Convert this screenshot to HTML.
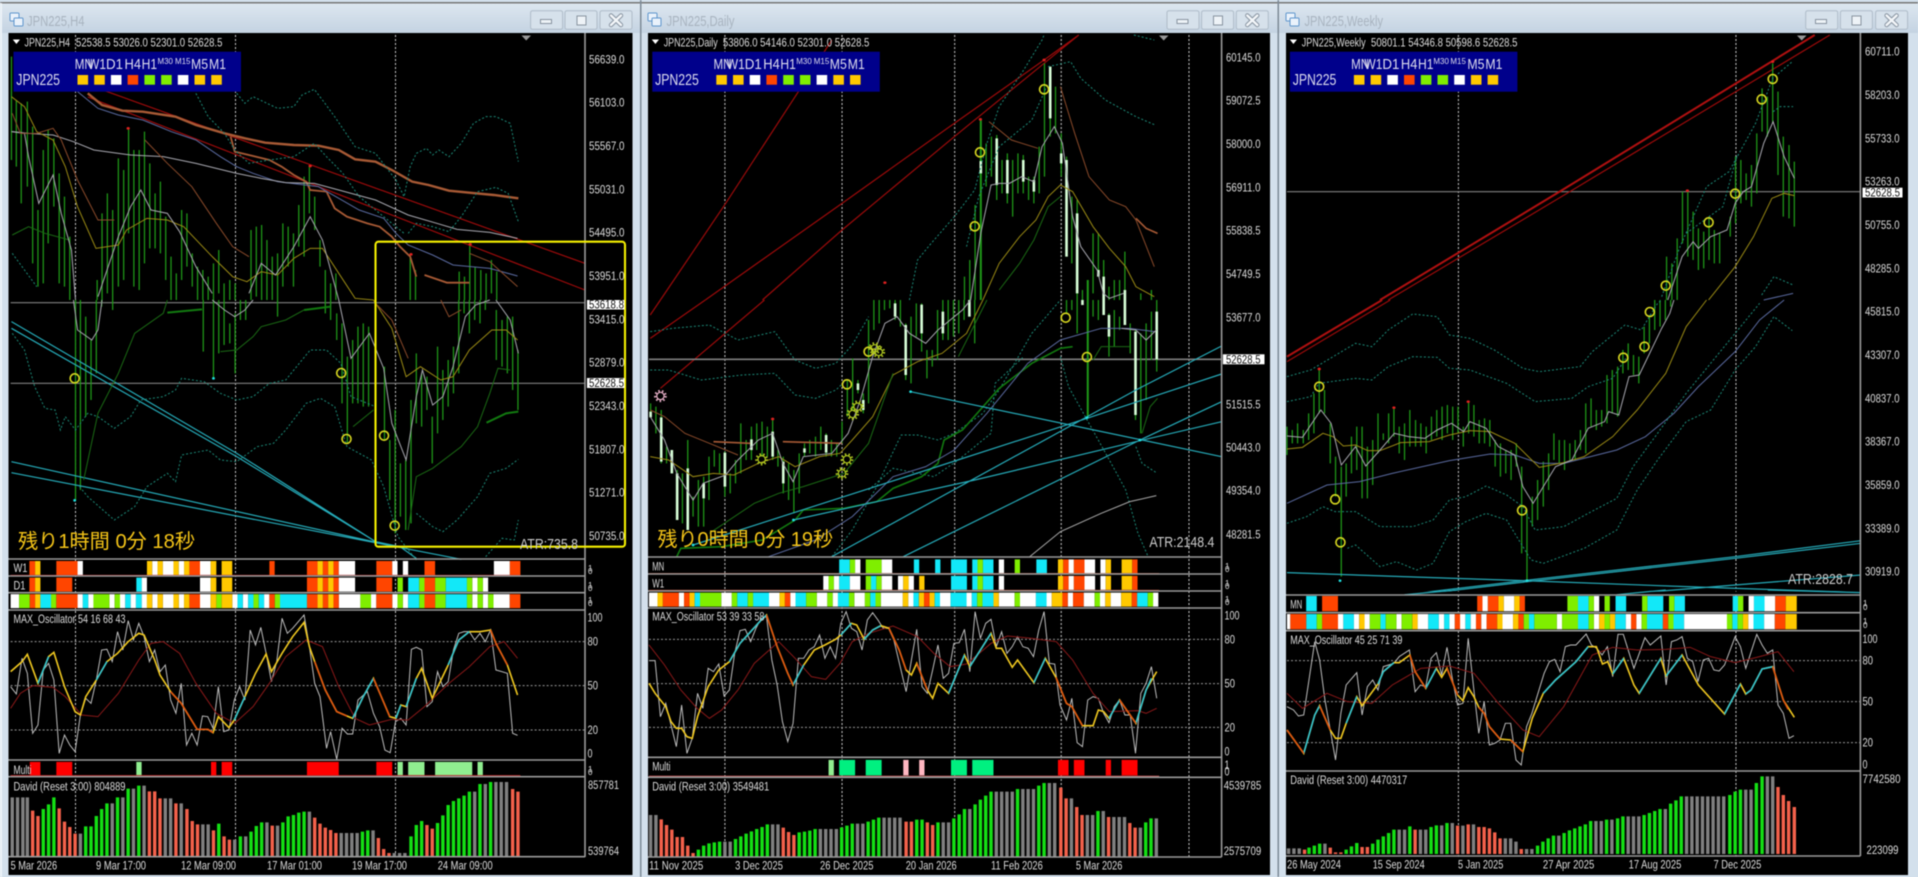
<!DOCTYPE html>
<html><head><meta charset="utf-8"><title>JPN225</title>
<style>
html,body{margin:0;padding:0;background:#d3e0ec;width:1918px;height:877px;overflow:hidden}
svg{position:absolute;left:0;top:0;filter:blur(.45px)}
path,ellipse{vector-effect:non-scaling-stroke;fill:none}
text{font-family:"Liberation Sans","Noto Sans CJK JP",sans-serif;font-size:12.3px;fill:#ddd}
.ch{stroke:#1f9a18;stroke-width:1.25}
.bd{stroke:#d8ffd8;stroke-width:2.6}
.dt{stroke:#1c8a78;stroke-dasharray:2 2;stroke-width:1}
.vd{stroke:#d0d0d0;stroke-dasharray:2 2;stroke-width:1}
.hd{stroke:#999;stroke-dasharray:2 2;stroke-width:1}
.cy{stroke:#25aab8;stroke-width:1.2}
.rd{stroke:#9c0a0a;stroke-width:1.2}
.wh{stroke:#a8a8b0;stroke-width:1}
.ol{stroke:#9a8a14;stroke-width:1}
.br{stroke:#8a4a2a;stroke-width:1}
.tb{stroke:#a85a35;stroke-width:2.4}
.bl{stroke:#5a6aa0;stroke-width:1}
.dg{stroke:#1a6a14;stroke-width:1}
.tg{stroke:#127a10;stroke-width:2}
.ci{stroke:#d8d820;stroke-width:1.6;rx:11px;ry:13.5px}
.ge{stroke:#b0c820;stroke-width:1.2}
.gd{stroke:#b0c820;stroke-width:3;stroke-dasharray:1.4 2}
.o{stroke:#ff4500}.y{stroke:#ffc800}.w{stroke:#fff}.c{stroke:#12e8f8}.g{stroke:#7fee00}
.ow{stroke:#c4c4c4;stroke-width:.95}
.my{stroke:#f0c820;stroke-width:1.6}
.mc{stroke:#30c4d4;stroke-width:1.6}
.mo{stroke:#e05510;stroke-width:1.6}
.sg{stroke:#8a1818;stroke-width:1}
.bg{stroke:#808080}.br2{stroke:#f4614b}.bn{stroke:#14e014}
.sep{stroke:#9a9a9a;stroke-width:1.6}
.ttl{font-size:15px;fill:#a8b3bf}
.pn{font-size:15px;fill:#dde}
.sm{font-size:8.5px;fill:#dde}
.jp{font-size:15.5px;fill:#dde}
.rem{font-size:20px;fill:#f5c518}
.atr{font-size:15px;fill:#ccc}
.blk{fill:#000}
</style></head><body>
<svg width="1918" height="877" viewBox="0 0 1918 877" xmlns="http://www.w3.org/2000/svg">
<defs><linearGradient id="tg" x1="0" y1="0" x2="0" y2="1"><stop offset="0" stop-color="#dde7f0"/><stop offset="1" stop-color="#c4d3e2"/></linearGradient></defs>
<rect width="1918" height="877" fill="#d3e0ec"/>
<rect x="0" y="3" width="1918" height="30" fill="url(#tg)"/>
<rect x="0" y="2" width="1918" height="1.5" fill="#777"/>
<rect x="640" y="0" width="1.5" height="877" fill="#7d8a96"/>
<rect x="1277.5" y="0" width="1.5" height="877" fill="#7d8a96"/>
<rect x="0" y="3" width="2" height="874" fill="#eef3f8"/>

<!-- charts -->
<rect x="8.5" y="33" width="624" height="842" fill="#000"/>
<rect x="648" y="33" width="622" height="842" fill="#000"/>
<rect x="1286" y="33" width="622" height="842" fill="#000"/>

<!-- WINDOW 1 -->
<g transform="translate(0,0) scale(.40816,.33333)">
<path class="vd" d="M185 105V2570M577 105V2570M969 105V2570"/>
<path class="ch" d="M28 170V480M40 300V500M52 310V610M67 305V560M80 380V790M93 630V860M106 450V850M118 390V730M132 415V620M145 520V850M158 590V860M171 710V900M238 840V900M250 640V900M263 580V880M276 630V900M290 475V860M303 510V840M315 385V700M328 450V860M341 450V870M354 395V790M367 490V745M380 580V745M393 545V760M406 650V840M419 770V900M432 820V900M445 630V840M458 640V800M471 760V860M484 800V900M497 810V900M510 830V900M523 790V900M536 750V880M549 850V900M563 840V900M576 850V900M615 690V900M628 680V890M641 675V900M654 720V900M667 770V900M680 760V900M693 670V860M706 680V800M719 700V860M732 615V740M745 530V770M758 495V640M771 590V690M784 720V800M797 810V900M810 850V900M823 820V900M1005 760V900M1018 810V900M1125 815V900M1138 830V900M1151 735V900M1164 800V900M1178 810V900M1191 820V900M1204 780V880M1217 815V900"/>
<path class="rd" d="M215 254L1433 790M215 291L1433 870"/>
<path class="tb" d="M215 280L250 315 300 332 350 335 430 350 480 375 550 400 600 415 650 428 720 435 780 437 830 450 870 478 920 485 960 510 1010 545 1050 555 1100 572 1150 578 1210 585 1270 595"/>
<path class="tb" style="stroke-width:1.8" d="M565 410L575 455 620 468 660 480 690 500 720 525 750 545 760 570 800 575 820 625 850 650 900 670 930 680 960 710 980 740 1005 770 1020 830M1040 825L1095 848 1150 848"/>
<path class="bl" d="M190 275L240 325 290 345 350 360 420 395 480 420 540 470 580 500 620 520 680 545 780 560 830 595 880 630 940 655 970 700 1000 735 1060 765 1110 795 1200 805 1268 828"/>
<path class="wh" d="M30 395L70 400 130 405 180 425 230 450 320 465 400 470 480 490 580 520 640 535 700 548 770 550 830 570 920 600 1000 645 1070 670 1120 688 1200 697 1268 715"/>
<path class="dt" d="M480 280L510 350 550 400 575 450 610 490 660 480 720 470 770 430 800 470 840 520 880 590 930 640 990 700M580 280L600 310 620 290 680 325 720 320 740 285 770 268 790 300 820 350 870 440 920 460 970 540 990 590 1005 500 1020 460 1045 445 1060 465 1075 450 1100 470 1130 430 1160 370 1190 350 1215 350 1250 370 1270 485M1000 700L1020 670 1060 680 1100 695 1130 650 1170 575 1215 562 1245 580 1270 665M30 760L60 810 90 860"/>
<path class="dg" d="M30 705L70 680 110 700 170 720"/>
<path class="ol" d="M28 290L60 320 90 395 130 420 160 500 190 620 235 745 290 735 310 690 360 655 410 660 450 680 520 770 570 830 605 845 640 815 680 825 720 775 760 745 790 745 830 820 870 895 915 900"/>
<path class="wh" d="M28 395L60 400 70 470 95 610 130 525 150 640 175 750 185 900M240 890L290 710 320 620 345 570 370 630 410 640 440 695 480 800 520 880M610 880L640 790 675 825 720 740 760 650 790 720 830 900"/>
<path class="br" d="M30 340L50 400 90 400 130 385 150 420 190 540 240 660 280 660M355 420L410 490 470 560 530 670 570 740 610 770M1150 760L1200 785 1268 860"/>
<ellipse cx="314" cy="385" rx="4" ry="4" fill="#e02020" style="fill:#e02020"/><ellipse cx="760" cy="498" rx="4" ry="4" style="fill:#e02020"/><ellipse cx="1007" cy="763" rx="4" ry="4" style="fill:#e02020"/><ellipse cx="1152" cy="733" rx="4" ry="4" style="fill:#e02020"/>
<g transform="translate(0,900)">
<path style="stroke:#808080;stroke-width:1.2" d="M26 8H1433M26 250H1433"/>
<path class="ch" d="M185 0V600M197 0V570M210 50V350M223 120V300M236 0V220M249 0V20M276 0V30M498 0V155M523 0V235M536 0V160M549 0V135M563 70V130M576 40V220M589 0V60M602 0V60M680 0V50M797 0V40M810 0V60M825 40V120M838 70V310M851 170V430M864 120V310M877 80V310M890 70V320M903 80V320M942 200V420M955 420V600M968 330V700M981 490V650M994 480V690M1007 300V670M1020 160V370M1033 220V380M1046 230V330M1059 350V490M1072 140V400M1085 210V360M1098 180V320M1111 140V280M1124 0V220M1137 0V40M1150 0V100M1163 0V60M1176 0V70M1189 0V30M1216 30V180M1230 60V200M1243 50V220M1256 50V270M1269 150V330"/>
<path class="cy" d="M28 65L580 460 920 725 980 740 1020 775M28 85L580 470 920 725M28 485L970 740 1130 778M28 518L970 740"/>
<path class="dt" d="M30 100L60 150 85 260 110 325 135 330 148 390 160 350 185 390 215 340 240 350 280 385 320 350 345 300 400 290 430 270 445 235 500 245 540 280 580 300 620 290 660 250 700 240 760 150 800 150 835 190 860 290 920 320M195 560L215 590 280 660 330 620 360 560 410 520 430 545 445 465 510 450 540 480 580 485 630 440 670 430 700 390 750 310 785 295 820 320 850 440 910 480 940 560 975 710 1020 780M1190 770L1230 715 1260 720 1270 660M1020 640L1060 680 1085 695 1120 660 1170 590 1200 520 1240 505 1270 478"/>
<path class="dg" d="M205 540L240 340 290 220 330 100 400 40 410 0M540 155L580 150 620 110 640 80 700 60 745 30M1000 690L1020 530 1060 505 1130 440 1170 380 1200 280 1220 205 1250 210M865 380L915 330"/>
<path class="tg" d="M1192 368L1240 340 1270 335M410 38L495 28M745 30L810 20"/>
<path class="wh" d="M180 0L190 90 225 120 240 90 250 0M520 0L550 30 575 50 600 30 620 0M830 0L860 175 905 100 940 205 960 370 995 480 1020 290 1035 210 1060 315 1085 290 1110 200 1140 50 1165 15 1200 0M1215 0L1250 60 1270 160"/>
<path class="ol" d="M915 0L960 85 995 230 1030 200 1080 240 1110 230 1150 150 1205 90 1240 90 1268 120"/>
<path class="br" d="M920 10L960 60 1000 175M1080 0L1100 50 1130 30"/>
<ellipse class="ci" cx="183" cy="235" rx="10" ry="12"/><ellipse class="ci" cx="836" cy="219" rx="10" ry="12"/><ellipse class="ci" cx="849" cy="417" rx="10" ry="12"/><ellipse class="ci" cx="941" cy="407" rx="10" ry="12"/><ellipse class="ci" cx="967" cy="677" rx="10" ry="12"/>
<ellipse cx="523" cy="235" rx="3.5" ry="4" style="fill:#20e0e0"/><ellipse cx="183" cy="601" rx="3.5" ry="4" style="fill:#20e0e0"/>
</g>
<!-- strips -->
<g transform="translate(0,900)" stroke-width="14">
<path class="o" d="M72 804H86M138 804H190M464 804H490M660 804H673M752 804H778M791 804H804M817 804H830M922 804H961M1040 804H1066M1249 804H1275"/>
<path class="y" d="M86 804H99M360 804H373M386 804H399M425 804H438M451 804H464M516 804H530M543 804H569M778 804H791M804 804H817"/>
<path class="w" d="M190 804H203M373 804H386M399 804H425M438 804H451M490 804H516M830 804H870M961 804H974M987 804H1000M1210 804H1249"/>
<path class="o" d="M72 854H86M138 854H177M752 854H778M791 854H804M817 854H830M922 854H961M1040 854H1066"/>
<path class="y" d="M86 854H99M516 854H530M543 854H569M778 854H791M804 854H817"/>
<path class="w" d="M347 854H360M490 854H516M830 854H870M1157 854H1170M1183 854H1196"/>
<path class="c" d="M334 854H347M1000 854H1027M1092 854H1144"/>
<path class="g" d="M974 854H987M1027 854H1040M1066 854H1092M1144 854H1157M1170 854H1183"/>
<path style="stroke:#c02020;stroke-width:1" d="M26 826H1275"/>
</g>
<g transform="translate(0,1770)">
<g stroke-width="14">
<path class="w" d="M26 33.5H47M190 33.5H203M216 33.5H229M268 33.5H281M294 33.5H307M320 33.5H333M347 33.5H360M373 33.5H386M399 33.5H425M438 33.5H451M490 33.5H516M569 33.5H582M595 33.5H608M647 33.5H660M830 33.5H883M909 33.5H922M961 33.5H974M987 33.5H1000M1157 33.5H1170M1183 33.5H1196M1209 33.5H1249"/>
<path class="g" d="M47 33.5H73M125 33.5H138M229 33.5H268M281 33.5H294M530 33.5H543M621 33.5H634M673 33.5H686M883 33.5H909M974 33.5H987M1027 33.5H1040M1066 33.5H1092M1144 33.5H1157M1170 33.5H1183M1196 33.5H1209"/>
<path class="o" d="M73 33.5H86M138 33.5H190M464 33.5H490M660 33.5H673M752 33.5H778M791 33.5H804M817 33.5H830M922 33.5H961M1040 33.5H1066M1249 33.5H1275"/>
<path class="y" d="M86 33.5H99M360 33.5H373M386 33.5H399M425 33.5H438M451 33.5H464M516 33.5H530M543 33.5H569M778 33.5H791M804 33.5H817"/>
<path class="c" d="M99 33.5H125M203 33.5H216M307 33.5H320M333 33.5H347M582 33.5H595M608 33.5H621M634 33.5H647M686 33.5H752M1000 33.5H1027M1092 33.5H1144"/>
</g>
<path class="hd" d="M26 155H1433M26 287H1433M26 420H1433"/>
<path class="ow" d="M26 290L40 312 54 205 67 250 80 430 93 405 106 240 119 220 132 270 145 490 158 435 171 465 184 485 197 375 210 325 223 340 236 270 249 180 262 178 275 215 288 125 301 180 314 92 327 150 340 100 353 140 366 215 379 180 392 245 405 225 418 330 431 370 444 280 457 465 470 430 483 465 496 378 509 380 522 415 535 290 548 425 561 420 574 330 587 290 600 330 613 120 626 165 639 112 652 190 665 275 678 215 691 85 704 130 717 115 745 75 758 170 771 280 784 320 800 475 810 425 825 508 838 415 851 432 864 432 877 330 900 305 915 370 930 410 943 480 956 488 969 395 982 385 995 405 1008 178 1020 172 1033 180 1046 350 1059 335 1072 245 1085 290 1098 275 1111 180 1124 130 1137 125 1150 125 1163 150 1176 130 1189 155 1202 120 1215 240 1230 245 1243 250 1256 430 1268 436"/>
<path class="sg" d="M26 355L50 310 80 287 130 292 160 320 200 375 240 380 290 310 340 210 370 160 400 155 440 190 480 280 530 370 575 400 620 350 660 280 700 200 750 150 790 170 830 290 870 385 905 405 960 388 1000 390 1040 350 1100 280 1150 230 1200 170 1235 155 1268 205"/>
<path class="my" d="M26 245L54 215 67 193 93 280 119 200 132 187 158 290 184 365 197 375 210 320 236 270 262 215 288 190 314 155 340 130 353 135 379 210 392 255 418 305 444 340 483 418 509 418 522 428 535 380 561 413 574 390 600 320 626 250 652 192 665 245 691 190 717 140 745 97 758 170 771 215 797 300 825 365 850 378 864 385 890 320 915 265 955 380 970 385 982 345 995 350 1020 265 1033 235 1059 325 1098 225 1124 150 1150 125 1176 125 1202 120 1215 160 1243 225 1268 315"/>
<path class="mc" d="M93 280L119 200M236 270L262 215M574 390L600 320M864 385L890 320 915 265M970 385L982 345M995 350L1020 265M1098 225L1124 150 1150 125"/>
<path class="mo" d="M418 305L444 340 483 418 509 418 522 428M771 215L797 300 825 365 850 378M915 265L955 380M1202 120L1215 160 1243 225"/>
<g stroke-width="13.5">
<path style="stroke:#ff0000" d="M73 536H99M138 536H177M517 536H530M543 536H569M752 536H830M922 536H961"/>
<path style="stroke:#90ee90" d="M334 536H347M974 536H987M1000 536H1040M1066 536H1157M1170 536H1183"/>
</g>
<path style="stroke:#c02020;stroke-width:1" d="M26 557H1275"/>
<g stroke-width="3.4">
<path class="bg" d="M30 800V622M43 800V622M56 800V622M67 800V622M197 800V731M275 800V640M301 800V622M327 800V596M353 800V587M405 800V625M418 800V625M444 800V640M497 800V703M510 800V703M575 800V749M602 800V739M654 800V697M680 800V707M758 800V665M836 800V729M849 800V729M862 800V729M875 800V729M914 800V721M966 800V789M979 800V789M992 800V789M1163 800V605M1189 800V582M1215 800V576M1228 800V576M1241 800V576"/>
<path class="br2" d="M80 800V662M93 800V678M145 800V655M158 800V695M171 800V711M184 800V731M366 800V604M379 800V604M392 800V625M431 800V640M458 800V657M471 800V693M484 800V703M523 800V721M549 800V739M562 800V749M667 800V707M771 800V683M784 800V701M797 800V713M810 800V720M823 800V729M927 800V744M940 800V777M953 800V789M1046 800V705M1059 800V716M1256 800V597M1269 800V605"/>
<path class="bn" d="M106 800V657M119 800V643M132 800V622M210 800V709M223 800V709M236 800V678M249 800V657M262 800V640M288 800V622M314 800V596M340 800V587M536 800V701M589 800V739M615 800V725M628 800V708M641 800V697M693 800V697M706 800V679M719 800V675M732 800V668M745 800V665M888 800V725M901 800V721M1007 800V739M1020 800V705M1033 800V693M1072 800V699M1085 800V676M1098 800V645M1111 800V633M1124 800V625M1137 800V617M1150 800V605M1176 800V582M1202 800V576"/>
</g>
</g>
</g>
<path class="sep" d="M8.5 559H585M8.5 576H585M8.5 592.7H585M8.5 610H585M8.5 760H585M8.5 776.7H585M8.5 856.7H585M585 33V857"/>
<rect x="375.5" y="241.7" width="249.5" height="305" rx="3" fill="none" stroke="#f5f000" stroke-width="2.1"/>

<!-- WINDOW 2 -->
<g transform="translate(640,0) scale(.40816,.33333)">
<path class="vd" d="M208 105V2570M495 105V2570M771 105V2570M1032 105V2570M1345 105V2570"/>
<path class="rd" d="M50 900L210 610 380 290 470 120M160 900L495 610 770 370 990 180 1075 105M300 900L495 690 770 410 1020 160 1075 105"/>
<path class="ch" d="M795 830V900M808 780V900M821 615V900M848 430V560M861 410V530M874 405V600M887 480V580M900 460V610M913 480V650M926 460V580M939 465V580M952 530V600M965 530V610M978 440V580M991 190V530M1005 200V410M1018 260V400M1032 400V530M1045 470V770M1058 590V790M1071 600V900M1084 870V900M1097 840V900M1110 700V880M1123 700V830M1136 780V900M1149 860V900M1162 840V900M1175 840V900M1188 755V900M1227 880V900M1253 870V900"/>
<path class="ch" style="stroke-width:2" d="M835 360V900M1097 840V900"/>
<path class="bd" d="M835 483V520M874 415V555M900 480V580M939 480V545M965 540V575M1005 200V355M1032 460V490M1045 480V770M1071 640V880M1123 810V830M1136 830V900M1188 870V900"/>
<path class="wh" d="M810 900L835 700 860 555 880 550 905 550 935 530 965 545 985 440 1015 380 1035 430 1060 650 1080 740 1120 810 1135 880 1150 895 1185 880"/>
<path class="br" d="M855 365L880 390 910 420 975 445M1030 260L1065 400 1100 530 1150 600 1190 620 1215 660 1260 800"/>
<path class="tb" style="stroke-width:1.6" d="M1215 655L1240 685 1268 700"/>
<path class="ol" d="M840 900L880 790 930 710 970 660 1000 590 1030 555 1060 575 1110 680 1150 745 1190 800 1215 860 1260 890"/>
<path class="dg" d="M880 870L930 790 965 720 1000 620 1030 590"/>
<path class="dt" d="M660 900L680 780 710 735 770 650 820 570 850 430 880 320 940 210 985 120 990 105M800 740L830 590 880 440 960 360 1000 250M1000 200L1055 185 1080 235 1140 300 1215 350 1262 375M1210 105L1260 120"/>
<ellipse class="ci" cx="990" cy="268" rx="10" ry="12"/><ellipse class="ci" cx="833" cy="457" rx="10" ry="12"/><ellipse class="ci" cx="820" cy="679" rx="10" ry="12"/>
<ellipse cx="990" cy="180" rx="4" ry="4" style="fill:#e02020"/><ellipse cx="834" cy="358" rx="4" ry="4" style="fill:#e02020"/><ellipse cx="600" cy="848" rx="4" ry="4" style="fill:#e02020"/>
<g transform="translate(0,900)">
<path class="rd" d="M50 0L25 45M160 0L25 115M305 0L50 265"/>
<path style="stroke:#808080;stroke-width:1.6" d="M22 178H1425"/>
<path class="ch" d="M26 310V350M39 320V400M52 330V490M65 440V490M78 450V520M91 510V660M104 520V670M117 420V690M130 590V650M143 540V680M156 530V680M169 470V600M182 450V500M195 460V520M208 455V590M221 520V580M234 480V550M247 370V520M260 420V480M273 380V480M286 370V450M299 365V470M312 380V470M325 355V480M338 450V500M351 470V580M364 490V600M377 510V640M390 460V580M403 430V470M416 420V460M430 410V470M443 380V450M456 400V470M469 420V470M482 430V470M495 365V430M508 240V350M521 175V330M534 240V280M547 280V340M560 60V310M573 0V90M586 0V70M599 0V30M612 0V25M625 0V60M638 0V80M651 70V240M664 50V250M677 10V110M690 10V155M703 150V235M716 150V200M729 30V180M742 0V120M755 0V120M768 0V110M781 0V100M794 0V60M807 0V50M820 0V130M1045 0V40M1058 0V30M1071 0V100M1084 0V15M1110 0V50M1123 0V60M1136 0V45M1149 40V170M1162 30V140M1175 50V90M1188 0V75M1201 70V160M1214 90V360M1227 100V400M1240 70V300M1253 35V180M1266 0V215"/>
<path class="ch" style="stroke-width:2" d="M1097 0V355"/>
<path class="bd" d="M26 335V352M52 352V485M78 450V520M91 520V660M117 505V690M156 550V595M208 458V560M273 418V450M325 395V470M351 485V550M403 445V458M456 405V458M534 250V270M547 300V330M625 10V50M651 75V225M690 14V100M742 35V100M807 0V50M1084 0V15M1136 0V45M1149 45V110M1188 0V75M1214 95V345M1266 35V178"/>
<path class="dt" d="M25 95L80 85 170 75 240 120 330 95 380 180 430 205 480 190 520 135 560 50M25 210L70 210 150 240 250 225 330 220 380 285 430 295 480 270 510 235M470 770L520 690 580 560 630 430 640 405 680 405 730 420 770 400 840 340 880 270 960 100 1030 0M560 570L620 505 720 530 780 480 860 400 870 250 940 170M1030 170L1050 260 1100 370 1150 480 1190 570 1220 700 1245 770M1215 440L1230 490 1265 518"/>
<path class="br" d="M25 330L60 350 110 400 170 430 240 465"/>
<path class="tb" style="stroke-width:1.6" d="M180 425L270 430M350 425L495 430"/>
<path class="ol" d="M25 470L70 480 130 530 180 520 230 525 290 490 340 470 380 500 440 470 490 460 520 420 570 350 620 225 680 185 740 160 800 100 840 0"/>
<path class="tg" style="stroke-width:1.6" d="M90 770L100 745 200 740 300 720 380 660 400 630 500 625 580 605 620 565 690 530 730 490 745 420 790 390 880 265 960 190 1030 145 1060 140"/>
<path class="dg" d="M170 700L280 610 340 580 400 560 500 520 560 430 620 220M780 170L850 0M1230 400L1250 320 1268 295M1110 180L1130 140 1200 140"/>
<path class="bl" d="M315 770L430 720 520 650 620 530 700 500 770 450 850 340 950 190 1030 120 1130 85 1200 85 1260 95"/>
<path class="wh" d="M25 350L60 420 90 520 130 600 155 550 210 525 240 480 290 420 325 400 350 490 375 545 400 470 470 460 510 400 540 300 570 170 600 70 630 50 660 100 700 130 730 90 790 30 810 0M1180 85L1215 90 1240 120 1265 90"/>
<path style="stroke:#aaa;stroke-width:1" d="M955 770L1030 695 1130 640 1200 605 1265 587"/>
<path class="cy" d="M663 275L1425 470M130 735L665 525 1095 355 1425 222M376 660L820 540 1225 422 1425 365M470 770L1215 270 1425 138M645 770L1225 420 1425 305"/>
<ellipse class="ci" cx="507" cy="253" rx="10" ry="12"/><ellipse class="ci" cx="560" cy="155" rx="10" ry="12"/><ellipse class="ci" cx="1043" cy="53" rx="10" ry="12"/><ellipse class="ci" cx="1095" cy="171" rx="10" ry="12"/>
<ellipse class="ge" cx="585" cy="156" rx="9" ry="11"/><ellipse class="gd" cx="585" cy="156" rx="12" ry="14"/>
<ellipse class="ge" cx="575" cy="145" rx="9" ry="11"/><ellipse class="gd" cx="575" cy="145" rx="12" ry="14"/>
<ellipse class="ge" cx="533" cy="320" rx="9" ry="11"/><ellipse class="gd" cx="533" cy="320" rx="12" ry="14"/>
<ellipse class="ge" cx="521" cy="342" rx="9" ry="11"/><ellipse class="gd" cx="521" cy="342" rx="12" ry="14"/>
<ellipse class="ge" cx="298" cy="478" rx="9" ry="11"/><ellipse class="gd" cx="298" cy="478" rx="12" ry="14"/>
<ellipse class="ge" cx="507" cy="478" rx="9" ry="11"/><ellipse class="gd" cx="507" cy="478" rx="12" ry="14"/>
<ellipse class="ge" cx="495" cy="520" rx="9" ry="11"/><ellipse class="gd" cx="495" cy="520" rx="12" ry="14"/>
<ellipse class="ge" style="stroke:#e8b0c8" cx="50" cy="288" rx="9" ry="11"/><ellipse class="gd" style="stroke:#e8b0c8" cx="50" cy="288" rx="12" ry="14"/>
<ellipse cx="663" cy="275" rx="3.5" ry="4" style="fill:#20e0e0"/><ellipse cx="376" cy="660" rx="3.5" ry="4" style="fill:#20e0e0"/><ellipse cx="1095" cy="353" rx="3.5" ry="4" style="fill:#20e0e0"/><ellipse cx="1225" cy="420" rx="3.5" ry="4" style="fill:#20e0e0"/><ellipse cx="130" cy="735" rx="3.5" ry="4" style="fill:#20e0e0"/>
<ellipse cx="325" cy="357" rx="4" ry="4" style="fill:#e02020"/>
<g stroke-width="14">
<path class="c" d="M488 799H514M671 799H684M723 799H736M762 799H801M814 799H827M840 799H866M971 799H997M488 848.5H514M762 848.5H801M814 848.5H827M840 848.5H866M566 848.5H579"/>
<path class="g" d="M514 799H527M553 799H592M827 799H840M918 799H931M462 848.5H475M553 848.5H566M579 848.5H592M827 848.5H840"/>
<path class="w" d="M527 799H540M592 799H618M879 799H892M1050 799H1063M1089 799H1115M1128 799H1141M449 848.5H462M475 848.5H488M514 848.5H540M592 848.5H618M632 848.5H645M658 848.5H671M879 848.5H892M1050 848.5H1063M1089 848.5H1115M1128 848.5H1141"/>
<path class="y" d="M1024 799H1037M1141 799H1154M1180 799H1206M645 848.5H658M684 848.5H697M1024 848.5H1037M1141 848.5H1154M1180 848.5H1206"/>
<path class="o" d="M1037 799H1050M1063 799H1089M1206 799H1219M1037 848.5H1050M1063 848.5H1089M1206 848.5H1219"/>
</g>
<path style="stroke:#d04020;stroke-width:1" d="M22 821H1272M22 871H1272"/>
</g>
<g transform="translate(0,1770)">
<g stroke-width="14">
<path class="w" d="M22 29H43M95 29H108M199 29H225M316 29H342M368 29H381M433 29H459M472 29H485M525 29H551M590 29H644M657 29H670M735 29H761M800 29H813M879 29H918M931 29H970M996 29H1009M1048 29H1061M1087 29H1114M1127 29H1140M1153 29H1179M1257 29H1270"/>
<path class="y" d="M43 29H56M121 29H134M342 29H355M644 29H657M683 29H696M709 29H722M866 29H879M1009 29H1035M1140 29H1153M1179 29H1205"/>
<path class="o" d="M56 29H95M108 29H121M355 29H368M696 29H709M1035 29H1048M1061 29H1087M1205 29H1218"/>
<path class="c" d="M134 29H147M238 29H264M277 29H316M381 29H407M485 29H512M564 29H577M670 29H683M722 29H735M761 29H800M813 29H826M839 29H866M970 29H996M1218 29H1244"/>
<path class="g" d="M147 29H199M225 29H238M264 29H277M407 29H433M459 29H472M512 29H525M551 29H564M577 29H590M826 29H839M918 29H931M1114 29H1127M1244 29H1257"/>
</g>
<path class="hd" d="M22 148H1425M22 281H1425M22 412H1425"/>
<path class="ow" d="M22 212L37 212 50 380 63 340 89 470 102 345 115 490 128 445 141 310 154 355 167 235 180 245 193 222 206 318 219 300 232 190 245 122 258 118 271 155 284 115 297 85 310 80 323 210 336 285 349 395 362 455 375 400 388 205 401 205 414 180 427 170 440 135 453 205 466 170 479 205 492 100 505 65 518 115 531 125 544 180 557 90 570 68 583 90 596 115 609 115 622 150 652 305 665 210 678 118 691 290 704 310 717 240 730 165 743 265 756 250 769 160 782 158 795 118 808 245 821 65 834 145 847 100 860 88 873 170 886 125 899 190 912 170 925 140 938 170 951 175 964 200 977 120 990 65 1003 220 1016 222 1029 345 1045 390 1058 325 1071 458 1084 470 1097 330 1110 320 1123 325 1136 370 1149 398 1162 350 1175 330 1188 375 1201 375 1214 490 1227 310 1240 280 1253 230 1266 325"/>
<path class="sg" d="M22 165L60 225 100 300 140 355 170 385 200 360 240 300 280 220 340 155 380 205 420 260 455 268 490 220 520 155 560 130 620 108 680 140 720 190 760 230 800 222 860 160 900 138 960 145 1020 155 1060 210 1110 310 1150 365 1220 362 1240 370 1266 355"/>
<path class="my" d="M22 280L37 310 63 350 76 395 89 415 102 415 115 440 128 445 141 380 167 290 193 240 219 215 245 160 271 125 297 90 310 75 336 170 362 250 375 285 401 225 427 180 453 165 479 148 492 135 518 100 531 105 549 148 570 120 590 107 610 115 635 180 652 240 665 255 678 220 704 300 717 325 730 280 756 310 795 195 808 230 860 130 873 175 886 175 912 232 925 210 965 278 993 205 1019 262 1045 340 1058 350 1084 407 1110 407 1123 360 1136 365 1149 385 1175 330 1215 400 1240 300 1266 245"/>
<path class="mc" d="M219 215L245 160 271 125 297 90 310 75M375 285L401 225M492 135L518 100M549 148L570 120 590 107M756 310L795 195M808 230L860 130M965 278L993 205M1149 385L1175 330M1215 400L1240 300 1253 265"/>
<path class="mo" d="M310 75L336 170 362 250 375 285M610 115L635 180 652 240M678 220L704 300M1019 262L1045 340 1058 350 1084 407M1175 330L1215 400"/>
<g stroke-width="15.5">
<path style="stroke:#90ee90" d="M462 533H475"/>
<path style="stroke:#00f080" d="M488 533H527M553 533H592M762 533H801M814 533H866"/>
<path style="stroke:#ffb6c1" d="M645 533H658M684 533H697"/>
<path style="stroke:#ff0000" d="M1024 533H1050M1063 533H1089M1141 533H1154M1180 533H1219"/>
</g>
<path style="stroke:#d06060;stroke-width:1.2" d="M22 559H1272"/>
<g stroke-width="3.4">
<path class="bg" d="M26 800V675M39 800V675M208 800V755M221 800V755M325 800V703M338 800V703M442 800V717M455 800V717M468 800V717M481 800V717M533 800V701M546 800V701M598 800V683M611 800V683M624 800V683M637 800V683M743 800V697M756 800V697M808 800V657M873 800V605M886 800V605M899 800V605M912 800V605M938 800V597M951 800V597M964 800V597M1003 800V579M1016 800V579M1057 800V625M1096 800V675M1109 800V675M1135 800V663M1161 800V681M1174 800V681M1187 800V681M1226 800V713M1265 800V685"/>
<path class="br2" d="M52 800V688M65 800V705M78 800V719M91 800V741M104 800V741M117 800V767M130 800V789M351 800V713M364 800V726M377 800V735M652 800V695M665 800V695M704 800V697M717 800V705M1031 800V593M1044 800V625M1070 800V651M1083 800V675M1148 800V681M1200 800V699M1213 800V713"/>
<path class="bn" d="M143 800V779M156 800V767M169 800V760M182 800V757M195 800V755M234 800V747M247 800V739M260 800V731M273 800V724M286 800V717M299 800V711M312 800V703M390 800V727M403 800V725M416 800V722M429 800V717M494 800V712M507 800V707M520 800V701M559 800V695M572 800V689M585 800V683M678 800V689M691 800V689M730 800V697M769 800V685M782 800V673M795 800V657M821 800V643M834 800V629M847 800V617M860 800V605M925 800V597M977 800V587M990 800V579M1122 800V663M1239 800V697M1252 800V685"/>
</g>
</g>
</g>
<path class="sep" d="M648 557H1221.6M648 574H1221.6M648 591H1221.6M648 608H1221.6M648 757.3H1221.6M648 777.3H1221.6M648 857H1221.6M1221.6 33V857"/>

<!-- WINDOW 3 -->
<g transform="translate(1278,0) scale(.40816,.33333)">
<path class="vd" d="M442 105V2570M1122 105V2570"/>
<path style="stroke:#808080;stroke-width:1.2" d="M22 575H1427"/>
<path style="stroke:#b01010;stroke-width:2" d="M250 900L690 575 1315 105"/>
<path class="rd" d="M270 900L715 575 1352 105"/>
<path class="ch" d="M952 770V900M965 790V900M978 715V900M991 575V730M1004 570V770M1017 635V780M1030 685V810M1043 695V805M1056 650V780M1069 690V790M1082 700V790M1108 650V710M1121 470V670M1134 480V610M1147 520V600M1160 495V620M1173 400V580M1186 265V395M1199 290V410M1212 190V370M1225 275V525M1238 410V650M1252 435V655M1265 485V680"/>
<path class="wh" d="M955 900L990 770 1017 725 1030 745 1060 710 1100 690 1120 610 1140 575 1160 560 1190 430 1213 365 1240 470 1265 535"/>
<path class="ol" d="M1055 900L1120 800 1165 710 1210 595 1240 580 1265 587"/>
<path class="dt" d="M940 890L985 740 1050 560 1105 515 1170 370 1212 235 1260 185M1000 700L1090 620 1125 465M1213 335L1230 320 1262 320M1185 885L1215 830 1262 855"/>
<path class="bl" d="M1190 900L1262 880"/>
<ellipse class="ci" cx="1212" cy="237" rx="10" ry="12"/><ellipse class="ci" cx="1185" cy="298" rx="10" ry="12"/><ellipse class="ci" cx="1120" cy="581" rx="10" ry="12"/><ellipse class="ci" cx="1055" cy="667" rx="10" ry="12"/><ellipse class="ci" cx="950" cy="857" rx="10" ry="12"/>
<ellipse cx="1212" cy="185" rx="4" ry="4" style="fill:#e02020"/><ellipse cx="1003" cy="572" rx="4" ry="4" style="fill:#e02020"/>
<g transform="translate(0,900)">
<path style="stroke:#b01010;stroke-width:2" d="M22 170L255 0"/>
<path class="rd" d="M22 185L275 0"/>
<path class="ch" d="M22 380V465M35 390V430M48 370V430M62 390V430M75 340V420M88 280V400M101 210V340M114 270V340M128 370V490M141 470V590M155 500V830M167 490V590M180 410V520M193 380V510M206 380V595M219 440V595M232 420V555M245 340V460M258 400V420M271 340V430M284 325V410M297 380V460M310 370V480M323 330V440M337 360V440M350 370V440M363 380V460M376 350V420M389 330V410M402 320V420M415 315V400M428 320V420M441 320V400M454 380V440M467 305V400M480 315V410M493 360V430M506 355V430M519 360V440M532 420V500M545 430V530M558 450V520M571 450V540M584 430V500M597 500V760M610 630V845M623 590V680M636 540V660M650 485V620M663 460V570M676 400V480M689 420V490M702 420V510M715 430V480M728 420V480M741 390V450M754 310V460M767 295V380M780 330V390M793 330V380M806 225V370M819 210V340M832 200V350M845 150V220M858 130V210M871 165V225M884 170V250M897 80V160M910 45V130M923 0V90M936 0V80M949 0V60M962 0V20"/>
<path class="bl" d="M22 610L120 555 200 545 280 520 420 482 520 462 580 465 640 490 700 490 830 450 900 410 970 340 1030 260 1120 155 1180 60 1240 0"/>
<path class="ol" d="M22 447L60 442 110 400 135 410 160 438 190 435 220 452 250 452 300 428 370 425 420 405 470 392 520 395 580 430 640 502 700 488 750 470 820 410 880 330 950 220 1000 80 1050 0"/>
<path class="wh" d="M22 408L60 412 105 330 130 370 155 495 190 440 215 498 250 450 285 400 320 410 360 415 390 390 425 370 455 395 470 365 510 385 540 440 580 465 600 560 625 610 650 560 680 500 720 480 760 385 800 365 810 335 835 345 860 230 885 225 940 85 960 40 970 0"/>
<path class="dt" d="M22 230L80 210 190 130 230 140 270 90 330 42 390 50 420 105 470 115 530 150 600 205 640 215 740 200 770 155 850 75 890 90 930 10 940 0M22 305L80 290 100 250 190 235 230 240 270 200 330 170 390 172 420 205 470 210 560 250 630 305 720 295 760 260 820 235 860 160M22 670L70 650 110 620 140 635 190 635 250 680 330 680 380 660 420 600 460 590 510 558 560 585 600 620 630 690 700 680 760 640 830 595 870 500 930 400 1000 280 1120 100 1180 10M170 745L190 735 250 800 290 785 340 810 380 790 420 695 460 665 510 640 560 660 620 780 650 790 750 745 830 690 880 570 930 480 1000 365 1060 330 1120 210 1170 140 1215 50 1260 92"/>
<path class="cy" d="M22 818L600 842 1000 860 1428 878M310 884L600 842 1120 770 1428 722M340 884L610 845 1120 775 1428 730M830 884L1120 855 1428 825"/>
<ellipse class="ci" cx="101" cy="260" rx="10" ry="12"/><ellipse class="ci" cx="140" cy="598" rx="10" ry="12"/><ellipse class="ci" cx="153" cy="727" rx="10" ry="12"/><ellipse class="ci" cx="598" cy="631" rx="10" ry="12"/><ellipse class="ci" cx="846" cy="173" rx="10" ry="12"/><ellipse class="ci" cx="898" cy="140" rx="10" ry="12"/><ellipse class="ci" cx="911" cy="36" rx="10" ry="12"/>
<ellipse cx="101" cy="207" rx="4" ry="4" style="fill:#e02020"/><ellipse cx="284" cy="323" rx="4" ry="4" style="fill:#e02020"/><ellipse cx="466" cy="305" rx="4" ry="4" style="fill:#e02020"/>
<ellipse cx="152" cy="842" rx="3.5" ry="4" style="fill:#20e0e0"/><ellipse cx="610" cy="842" rx="3.5" ry="4" style="fill:#20e0e0"/>
</g>
<g transform="translate(0,1770)">
<rect x="22" y="5" width="1405" height="10" fill="#000" />
<path class="cy" d="M310 14L440 0M830 14L950 0M1200 0L1428 8"/>
<g stroke-width="15.3">
<path class="c" d="M69 41H95M735 41H761M827 41H853M905 41H944M971 41H997M1114 41H1127M1166 41H1192M69 95H95M160 95H186M251 95H264M368 95H394M407 95H420M459 95H472M615 95H628M735 95H761M826 95H852M904 95H943M969 95H995M1113 95H1126M1165 95H1191"/>
<path class="o" d="M108 41H147M488 41H501M514 41H540M592 41H605M1218 41H1244M30 95H69M108 95H147M433 95H446M485 95H498M511 95H537M589 95H602M865 95H878M943 95H956M1217 95H1243"/>
<path class="w" d="M501 41H514M553 41H579M774 41H787M1153 41H1166M1192 41H1218M22 95H30M147 95H160M186 95H199M212 95H225M290 95H303M342 95H368M394 95H407M420 95H433M446 95H459M472 95H485M498 95H511M550 95H576M683 95H696M774 95H787M852 95H865M878 95H891M995 95H1100M1152 95H1165M1191 95H1217"/>
<path class="y" d="M540 41H553M579 41H592M1244 41H1271M199 95H212M329 95H342M537 95H550M576 95H589M787 95H800M813 95H826M1139 95H1152M1243 95H1271"/>
<path class="g" d="M709 41H735M761 41H774M800 41H813M892 41H905M958 41H971M1127 41H1140M95 95H108M225 95H251M264 95H290M303 95H329M602 95H615M628 95H683M696 95H735M761 95H774M800 95H813M891 95H904M956 95H969M1100 95H1113M1126 95H1139"/>
</g>
<path class="hd" d="M22 212H1427M22 335H1427M22 458H1427"/>
<path class="ow" d="M22 350L38 360 50 378 63 375 90 155 102 210 115 330 128 420 141 510 154 370 167 285 193 248 206 375 219 290 232 270 245 300 258 230 271 225 284 220 297 200 322 180 336 305 349 285 362 290 375 205 388 188 401 255 414 172 427 265 440 345 453 340 466 145 479 290 492 430 505 335 518 465 531 460 544 450 557 400 570 400 583 510 596 525 609 410 622 370 652 250 665 215 678 208 691 245 704 170 717 165 730 165 755 132 768 165 781 175 794 195 807 170 820 260 833 133 846 133 872 235 899 143 912 165 938 138 951 285 964 155 977 150 990 140 1003 205 1016 215 1029 275 1042 210 1055 205 1068 240 1081 243 1094 225 1120 140 1133 170 1146 235 1173 133 1186 165 1199 190 1212 180 1225 345 1238 370 1252 445 1264 437"/>
<path class="sg" d="M22 310L60 355 120 310 170 335 230 340 280 285 350 235 420 228 480 250 540 340 600 420 640 440 700 350 770 195 820 172 880 180 950 178 1010 172 1060 200 1120 218 1180 200 1225 185 1264 245"/>
<path class="my" d="M22 420L63 490 90 375 102 347 128 420 141 445 154 445 167 400 193 320 206 347 245 282 258 245 284 218 297 218 323 195 336 245 362 295 388 235 401 262 414 235 440 315 453 332 466 293 480 320 492 352 505 370 518 410 544 447 570 450 600 485 623 385 650 310 680 270 730 215 760 170 780 170 795 222 808 215 820 252 847 205 872 285 885 310 938 205 951 258 990 195 1030 285 1094 372 1133 282 1146 312 1159 300 1186 237 1212 230 1238 330 1265 382"/>
<path class="mc" d="M63 490L90 375 102 347M167 400L193 320M245 282L258 245 284 218M362 295L388 235M650 310L680 270 730 215 760 170M820 252L847 205M885 310L938 205M951 258L990 195M1094 372L1133 282M1146 312L1159 300 1186 237 1212 230"/>
<path class="mo" d="M22 420L63 490M102 347L128 420M323 195L336 245 362 295M414 235L440 315M492 352L505 370 518 410 544 447M570 450L600 485M1212 230L1238 330 1250 358"/>
<g stroke-width="3.4">
<path class="bg" d="M26 792V775M39 792V775M52 792V775M115 792V761M297 792V719M310 792V719M349 792V719M362 792V719M401 792V706M427 792V699M453 792V707M479 792V703M557 792V745M570 792V745M583 792V755M609 792V777M622 792V777M688 792V737M779 792V693M792 792V693M818 792V689M858 792V679M871 792V679M884 792V679M949 792V657M1001 792V619M1014 792V619M1027 792V619M1040 792V619M1053 792V619M1066 792V619M1079 792V619M1092 792V619M1146 792V599M1159 792V599M1199 792V559M1212 792V559"/>
<path class="br2" d="M65 792V779M128 792V773M141 792V787M154 792V787M206 792V771M219 792V771M336 792V719M440 792V707M466 792V703M492 792V711M505 792V711M518 792V715M531 792V727M544 792V745M596 792V777M1225 792V591M1238 792V615M1251 792V633M1265 792V651"/>
<path class="bn" d="M76 792V773M89 792V767M102 792V761M167 792V779M180 792V769M193 792V759M232 792V761M245 792V749M258 792V739M271 792V729M284 792V719M323 792V709M375 792V711M388 792V706M414 792V699M636 792V767M649 792V755M662 792V745M675 792V737M701 792V729M714 792V721M727 792V715M740 792V709M753 792V703M766 792V693M805 792V689M832 792V685M845 792V679M897 792V675M910 792V669M923 792V663M936 792V657M962 792V641M975 792V631M988 792V619M1107 792V615M1120 792V605M1133 792V599M1172 792V579M1186 792V559"/>
</g>
</g>
</g>
<path class="sep" d="M1286 595H1860.4M1286 612.7H1860.4M1286 630.7H1860.4M1286 771H1860.4M1286 856H1860.4M1860.4 33V856"/>

<!-- panels -->
<g>
<rect x="13.5" y="51.7" width="227.5" height="40" fill="#00008b"/>
<text class="pn" x="74.7" y="69" textLength="18" lengthAdjust="spacingAndGlyphs">MN</text><text class="pn" x="88" y="69" textLength="18" lengthAdjust="spacingAndGlyphs">W1</text><text class="pn" x="106" y="69" textLength="17" lengthAdjust="spacingAndGlyphs">D1</text><text class="pn" x="124.5" y="69" textLength="16.5" lengthAdjust="spacingAndGlyphs">H4</text><text class="pn" x="141.6" y="69" textLength="15.5" lengthAdjust="spacingAndGlyphs">H1</text><text class="sm" x="157.5" y="64" textLength="15.5" lengthAdjust="spacingAndGlyphs">M30</text><text class="sm" x="175" y="64" textLength="15.5" lengthAdjust="spacingAndGlyphs">M15</text><text class="pn" x="191" y="69" textLength="17" lengthAdjust="spacingAndGlyphs">M5</text><text class="pn" x="209" y="69" textLength="17" lengthAdjust="spacingAndGlyphs">M1</text>
<text class="jp" x="16.3" y="85" textLength="43.7" lengthAdjust="spacingAndGlyphs">JPN225</text>
<rect x="77.5" y="75" width="10.6" height="9.7" fill="#ffc800"/><rect x="94.2" y="75" width="10.6" height="9.7" fill="#ffc800"/><rect x="110.9" y="75" width="10.6" height="9.7" fill="#fff"/><rect x="127.6" y="75" width="10.6" height="9.7" fill="#ff4500"/><rect x="144.4" y="75" width="10.6" height="9.7" fill="#7fee00"/><rect x="161.1" y="75" width="10.6" height="9.7" fill="#7fee00"/><rect x="177.8" y="75" width="10.6" height="9.7" fill="#fff"/><rect x="194.5" y="75" width="10.6" height="9.7" fill="#ffc800"/><rect x="211.2" y="75" width="10.6" height="9.7" fill="#ffc800"/>
</g>
<g transform="translate(638.8,0)">
<rect x="13.5" y="51.7" width="227.5" height="40" fill="#00008b"/>
<text class="pn" x="74.7" y="69" textLength="18" lengthAdjust="spacingAndGlyphs">MN</text><text class="pn" x="88" y="69" textLength="18" lengthAdjust="spacingAndGlyphs">W1</text><text class="pn" x="106" y="69" textLength="17" lengthAdjust="spacingAndGlyphs">D1</text><text class="pn" x="124.5" y="69" textLength="16.5" lengthAdjust="spacingAndGlyphs">H4</text><text class="pn" x="141.6" y="69" textLength="15.5" lengthAdjust="spacingAndGlyphs">H1</text><text class="sm" x="157.5" y="64" textLength="15.5" lengthAdjust="spacingAndGlyphs">M30</text><text class="sm" x="175" y="64" textLength="15.5" lengthAdjust="spacingAndGlyphs">M15</text><text class="pn" x="191" y="69" textLength="17" lengthAdjust="spacingAndGlyphs">M5</text><text class="pn" x="209" y="69" textLength="17" lengthAdjust="spacingAndGlyphs">M1</text>
<text class="jp" x="16.3" y="85" textLength="43.7" lengthAdjust="spacingAndGlyphs">JPN225</text>
<rect x="77.5" y="75" width="10.6" height="9.7" fill="#ffc800"/><rect x="94.2" y="75" width="10.6" height="9.7" fill="#ffc800"/><rect x="110.9" y="75" width="10.6" height="9.7" fill="#fff"/><rect x="127.6" y="75" width="10.6" height="9.7" fill="#ff4500"/><rect x="144.4" y="75" width="10.6" height="9.7" fill="#7fee00"/><rect x="161.1" y="75" width="10.6" height="9.7" fill="#7fee00"/><rect x="177.8" y="75" width="10.6" height="9.7" fill="#fff"/><rect x="194.5" y="75" width="10.6" height="9.7" fill="#ffc800"/><rect x="211.2" y="75" width="10.6" height="9.7" fill="#ffc800"/>
</g>
<g transform="translate(1276.4,0)">
<rect x="13.5" y="51.7" width="227.5" height="40" fill="#00008b"/>
<text class="pn" x="74.7" y="69" textLength="18" lengthAdjust="spacingAndGlyphs">MN</text><text class="pn" x="88" y="69" textLength="18" lengthAdjust="spacingAndGlyphs">W1</text><text class="pn" x="106" y="69" textLength="17" lengthAdjust="spacingAndGlyphs">D1</text><text class="pn" x="124.5" y="69" textLength="16.5" lengthAdjust="spacingAndGlyphs">H4</text><text class="pn" x="141.6" y="69" textLength="15.5" lengthAdjust="spacingAndGlyphs">H1</text><text class="sm" x="157" y="64" textLength="15.5" lengthAdjust="spacingAndGlyphs">M30</text><text class="sm" x="174" y="64" textLength="15.5" lengthAdjust="spacingAndGlyphs">M15</text><text class="pn" x="191" y="69" textLength="17" lengthAdjust="spacingAndGlyphs">M5</text><text class="pn" x="209" y="69" textLength="17" lengthAdjust="spacingAndGlyphs">M1</text>
<text class="jp" x="16.3" y="85" textLength="43.7" lengthAdjust="spacingAndGlyphs">JPN225</text>
<rect x="77.5" y="75" width="10.6" height="9.7" fill="#ffc800"/><rect x="94.2" y="75" width="10.6" height="9.7" fill="#ffc800"/><rect x="110.9" y="75" width="10.6" height="9.7" fill="#fff"/><rect x="127.6" y="75" width="10.6" height="9.7" fill="#ff4500"/><rect x="144.4" y="75" width="10.6" height="9.7" fill="#7fee00"/><rect x="161.1" y="75" width="10.6" height="9.7" fill="#7fee00"/><rect x="177.8" y="75" width="10.6" height="9.7" fill="#fff"/><rect x="194.5" y="75" width="10.6" height="9.7" fill="#ffc800"/><rect x="211.2" y="75" width="10.6" height="9.7" fill="#ffc800"/>
</g>

<!-- triangles -->
<polygon points="12.8,39.5 20,39.5 16.4,44" fill="#fff"/><polygon points="651.8,39.5 659,39.5 655.4,44" fill="#fff"/><polygon points="1289.8,39.5 1297,39.5 1293.4,44" fill="#fff"/>
<polygon points="521.5,35.5 531,35.5 526.2,40.5" fill="#999"/><polygon points="1159,35.5 1168.5,35.5 1163.7,40.5" fill="#999"/><polygon points="1797,35.5 1806.5,35.5 1801.7,40.5" fill="#999"/>

<!-- title bars -->
<g id="tb1">
<rect x="10" y="13" width="9" height="8" rx="1" fill="#eaf2fb" stroke="#5c94cc"/><rect x="14" y="18" width="9" height="8" rx="1" fill="#eaf2fb" stroke="#5c94cc"/>
<text class="ttl" x="27" y="26" textLength="57.5" lengthAdjust="spacingAndGlyphs">JPN225,H4</text>
</g>
<rect x="648" y="13" width="9" height="8" rx="1" fill="#eaf2fb" stroke="#5c94cc"/><rect x="652" y="18" width="9" height="8" rx="1" fill="#eaf2fb" stroke="#5c94cc"/>
<text class="ttl" x="666.5" y="26" textLength="68" lengthAdjust="spacingAndGlyphs">JPN225,Daily</text>
<rect x="1286" y="13" width="9" height="8" rx="1" fill="#eaf2fb" stroke="#5c94cc"/><rect x="1290" y="18" width="9" height="8" rx="1" fill="#eaf2fb" stroke="#5c94cc"/>
<text class="ttl" x="1304.5" y="26" textLength="78.5" lengthAdjust="spacingAndGlyphs">JPN225,Weekly</text>

<!-- buttons -->
<g fill="#d6e1eb" stroke="#aebbc8" stroke-width="1">
<rect x="530.6" y="10.7" width="32" height="18.6" rx="2"/><rect x="565" y="10.7" width="32" height="18.6" rx="2"/><rect x="600" y="10.7" width="32" height="18.6" rx="2"/>
<rect x="1167" y="10.7" width="32" height="18.6" rx="2"/><rect x="1201.6" y="10.7" width="32" height="18.6" rx="2"/><rect x="1236.3" y="10.7" width="32" height="18.6" rx="2"/>
<rect x="1805.7" y="10.7" width="32" height="18.6" rx="2"/><rect x="1840.4" y="10.7" width="32" height="18.6" rx="2"/><rect x="1875.6" y="10.7" width="32" height="18.6" rx="2"/>
</g>
<g fill="#eef3f7" stroke="#87939f" stroke-width="1">
<rect x="540.5" y="19.5" width="11" height="4"/><rect x="577" y="16" width="9" height="9"/>
<rect x="1177" y="19.5" width="11" height="4"/><rect x="1213.5" y="16" width="9" height="9"/>
<rect x="1815.5" y="19.5" width="11" height="4"/><rect x="1852" y="16" width="9" height="9"/>
</g>
<g fill="none" stroke-linecap="round">
<path style="vector-effect:none;stroke:#8793a0;stroke-width:4.4" d="M611 15.5L621 25M621 15.5L611 25M1247.3 15.5L1257.3 25M1257.3 15.5L1247.3 25M1886.6 15.5L1896.6 25M1896.6 15.5L1886.6 25"/>
<path style="vector-effect:none;stroke:#f4f7fa;stroke-width:2.4" d="M611 15.5L621 25M621 15.5L611 25M1247.3 15.5L1257.3 25M1257.3 15.5L1247.3 25M1886.6 15.5L1896.6 25M1896.6 15.5L1886.6 25"/>
</g>

<!-- headers -->
<text x="24.5" y="46.5" textLength="45.5" lengthAdjust="spacingAndGlyphs">JPN225,H4</text><text x="76" y="46.5" textLength="146.4" lengthAdjust="spacingAndGlyphs">52538.5 53026.0 52301.0 52628.5</text>
<text x="663.7" y="46.5" textLength="54" lengthAdjust="spacingAndGlyphs">JPN225,Daily</text><text x="722.9" y="46.5" textLength="146.5" lengthAdjust="spacingAndGlyphs">53806.0 54146.0 52301.0 52628.5</text>
<text x="1301.7" y="46.5" textLength="64" lengthAdjust="spacingAndGlyphs">JPN225,Weekly</text><text x="1371" y="46.5" textLength="146.5" lengthAdjust="spacingAndGlyphs">50801.1 54346.8 50598.6 52628.5</text>

<!-- W1 axis -->
<g>
<text x="589" y="63.3" textLength="35.5" lengthAdjust="spacingAndGlyphs">56639.0</text><text x="589" y="106.7" textLength="35.5" lengthAdjust="spacingAndGlyphs">56103.0</text><text x="589" y="150" textLength="35.5" lengthAdjust="spacingAndGlyphs">55567.0</text><text x="589" y="193.3" textLength="35.5" lengthAdjust="spacingAndGlyphs">55031.0</text><text x="589" y="236.7" textLength="35.5" lengthAdjust="spacingAndGlyphs">54495.0</text><text x="589" y="280" textLength="35.5" lengthAdjust="spacingAndGlyphs">53951.0</text><text x="589" y="323.3" textLength="35.5" lengthAdjust="spacingAndGlyphs">53415.0</text><text x="589" y="366.7" textLength="35.5" lengthAdjust="spacingAndGlyphs">52879.0</text><text x="589" y="410" textLength="35.5" lengthAdjust="spacingAndGlyphs">52343.0</text><text x="589" y="453.3" textLength="35.5" lengthAdjust="spacingAndGlyphs">51807.0</text><text x="589" y="496.7" textLength="35.5" lengthAdjust="spacingAndGlyphs">51271.0</text><text x="589" y="540" textLength="35.5" lengthAdjust="spacingAndGlyphs">50735.0</text>
</g>
<rect x="587" y="300" width="37.5" height="9.5" fill="#fff"/><text x="589" y="308.5" textLength="35" lengthAdjust="spacingAndGlyphs" style="fill:#111">53618.8</text>
<rect x="587" y="378" width="37.5" height="10" fill="#fff"/><text x="589" y="387" textLength="35" lengthAdjust="spacingAndGlyphs" style="fill:#111">52628.5</text>
<text class="rem" x="18" y="548" textLength="177" lengthAdjust="spacingAndGlyphs">残り1時間 0分 18秒</text>
<text class="atr" x="520" y="549" textLength="58" lengthAdjust="spacingAndGlyphs">ATR:735.8</text>
<text x="13.5" y="572" textLength="14" lengthAdjust="spacingAndGlyphs">W1</text><text x="13.5" y="589.7" textLength="12" lengthAdjust="spacingAndGlyphs">D1</text>
<text x="13.5" y="623" textLength="112" lengthAdjust="spacingAndGlyphs">MAX_Oscillator 54 16 68 43</text>
<text x="13.5" y="774" textLength="18" lengthAdjust="spacingAndGlyphs">Multi</text>
<text x="13.5" y="790.7" textLength="112" lengthAdjust="spacingAndGlyphs">David (Reset 3:00) 804889</text>
<text x="588" y="789" textLength="31" lengthAdjust="spacingAndGlyphs">857781</text><text x="588" y="855" textLength="31" lengthAdjust="spacingAndGlyphs">539764</text>
<text x="587.5" y="621.7" textLength="15" lengthAdjust="spacingAndGlyphs">100</text><text x="587.5" y="645.7" textLength="10.5" lengthAdjust="spacingAndGlyphs">80</text><text x="587.5" y="689.7" textLength="10.5" lengthAdjust="spacingAndGlyphs">50</text><text x="587.5" y="734" textLength="10.5" lengthAdjust="spacingAndGlyphs">20</text><text x="587.5" y="757.3" textLength="5" lengthAdjust="spacingAndGlyphs">0</text>
<text x="588" y="571" style="font-size:8px">1</text><text x="588" y="574" style="font-size:8px">0</text><text x="588" y="588" style="font-size:8px">1</text><text x="588" y="591" style="font-size:8px">0</text><text x="588" y="603" style="font-size:8px">1</text><text x="588" y="606" style="font-size:8px">0</text><text x="588" y="772" style="font-size:8px">1</text><text x="588" y="775" style="font-size:8px">0</text>
<text x="10.6" y="869.7" textLength="46.5" lengthAdjust="spacingAndGlyphs">5 Mar 2026</text><text x="96" y="869.7" textLength="50" lengthAdjust="spacingAndGlyphs">9 Mar 17:00</text><text x="181" y="869.7" textLength="55" lengthAdjust="spacingAndGlyphs">12 Mar 09:00</text><text x="267" y="869.7" textLength="55" lengthAdjust="spacingAndGlyphs">17 Mar 01:00</text><text x="352" y="869.7" textLength="55" lengthAdjust="spacingAndGlyphs">19 Mar 17:00</text><text x="437.7" y="869.7" textLength="55" lengthAdjust="spacingAndGlyphs">24 Mar 09:00</text>

<!-- W2 axis -->
<text x="1226" y="61.3" textLength="34.5" lengthAdjust="spacingAndGlyphs">60145.0</text><text x="1226" y="104.7" textLength="34.5" lengthAdjust="spacingAndGlyphs">59072.5</text><text x="1226" y="148" textLength="34.5" lengthAdjust="spacingAndGlyphs">58000.0</text><text x="1226" y="191.3" textLength="34.5" lengthAdjust="spacingAndGlyphs">56911.0</text><text x="1226" y="234.7" textLength="34.5" lengthAdjust="spacingAndGlyphs">55838.5</text><text x="1226" y="278" textLength="34.5" lengthAdjust="spacingAndGlyphs">54749.5</text><text x="1226" y="321.3" textLength="34.5" lengthAdjust="spacingAndGlyphs">53677.0</text><text x="1226" y="408.3" textLength="34.5" lengthAdjust="spacingAndGlyphs">51515.5</text><text x="1226" y="451.7" textLength="34.5" lengthAdjust="spacingAndGlyphs">50443.0</text><text x="1226" y="494.7" textLength="34.5" lengthAdjust="spacingAndGlyphs">49354.0</text><text x="1226" y="538.3" textLength="34.5" lengthAdjust="spacingAndGlyphs">48281.5</text>
<rect x="1222.9" y="354.3" width="41.6" height="10" fill="#fff"/><text x="1226" y="363.3" textLength="34.5" lengthAdjust="spacingAndGlyphs" style="fill:#111">52628.5</text>
<text class="rem" x="657.5" y="546" textLength="175.5" lengthAdjust="spacingAndGlyphs">残り0時間 0分 19秒</text>
<text class="atr" x="1149.4" y="547" textLength="65" lengthAdjust="spacingAndGlyphs">ATR:2148.4</text>
<text x="652.2" y="570.7" textLength="12" lengthAdjust="spacingAndGlyphs">MN</text><text x="652.2" y="587.3" textLength="12" lengthAdjust="spacingAndGlyphs">W1</text>
<text x="652.2" y="620.7" textLength="112.2" lengthAdjust="spacingAndGlyphs">MAX_Oscillator 53 39 33 58</text>
<text x="652.2" y="770.7" textLength="18.4" lengthAdjust="spacingAndGlyphs">Multi</text>
<text x="652.2" y="790.7" textLength="117" lengthAdjust="spacingAndGlyphs">David (Reset 3:00) 3549481</text>
<text x="1223.7" y="789.7" textLength="37.5" lengthAdjust="spacingAndGlyphs">4539785</text><text x="1223.7" y="855" textLength="37.5" lengthAdjust="spacingAndGlyphs">2575709</text>
<text x="1224.5" y="619.7" textLength="15" lengthAdjust="spacingAndGlyphs">100</text><text x="1224.5" y="643.7" textLength="10.5" lengthAdjust="spacingAndGlyphs">80</text><text x="1224.5" y="687.7" textLength="10.5" lengthAdjust="spacingAndGlyphs">50</text><text x="1224.5" y="731.3" textLength="10.5" lengthAdjust="spacingAndGlyphs">20</text><text x="1224.5" y="755.3" textLength="5" lengthAdjust="spacingAndGlyphs">0</text><text x="1224.5" y="769" textLength="5" lengthAdjust="spacingAndGlyphs">1</text><text x="1224.5" y="775.7" textLength="5" lengthAdjust="spacingAndGlyphs">0</text>
<text x="1225" y="569" style="font-size:8px">1</text><text x="1225" y="572" style="font-size:8px">0</text><text x="1225" y="586" style="font-size:8px">1</text><text x="1225" y="589" style="font-size:8px">0</text><text x="1225" y="602" style="font-size:8px">1</text><text x="1225" y="605" style="font-size:8px">0</text>
<text x="649" y="869.7" textLength="54.3" lengthAdjust="spacingAndGlyphs">11 Nov 2025</text><text x="735.1" y="869.7" textLength="47.8" lengthAdjust="spacingAndGlyphs">3 Dec 2025</text><text x="820" y="869.7" textLength="53.5" lengthAdjust="spacingAndGlyphs">26 Dec 2025</text><text x="905.7" y="869.7" textLength="51" lengthAdjust="spacingAndGlyphs">20 Jan 2026</text><text x="991" y="869.7" textLength="51.8" lengthAdjust="spacingAndGlyphs">11 Feb 2026</text><text x="1075.9" y="869.7" textLength="46.5" lengthAdjust="spacingAndGlyphs">5 Mar 2026</text>

<!-- W3 axis -->
<text x="1865" y="55.7" textLength="34.5" lengthAdjust="spacingAndGlyphs">60711.0</text><text x="1865" y="99" textLength="34.5" lengthAdjust="spacingAndGlyphs">58203.0</text><text x="1865" y="142.3" textLength="34.5" lengthAdjust="spacingAndGlyphs">55733.0</text><text x="1865" y="185.7" textLength="34.5" lengthAdjust="spacingAndGlyphs">53263.0</text><text x="1865" y="229" textLength="34.5" lengthAdjust="spacingAndGlyphs">50755.0</text><text x="1865" y="272.3" textLength="34.5" lengthAdjust="spacingAndGlyphs">48285.0</text><text x="1865" y="315.7" textLength="34.5" lengthAdjust="spacingAndGlyphs">45815.0</text><text x="1865" y="359" textLength="34.5" lengthAdjust="spacingAndGlyphs">43307.0</text><text x="1865" y="402.3" textLength="34.5" lengthAdjust="spacingAndGlyphs">40837.0</text><text x="1865" y="445.7" textLength="34.5" lengthAdjust="spacingAndGlyphs">38367.0</text><text x="1865" y="489" textLength="34.5" lengthAdjust="spacingAndGlyphs">35859.0</text><text x="1865" y="532.3" textLength="34.5" lengthAdjust="spacingAndGlyphs">33389.0</text><text x="1865" y="575.7" textLength="34.5" lengthAdjust="spacingAndGlyphs">30919.0</text>
<rect x="1862.5" y="187.7" width="40" height="9.8" fill="#fff"/><text x="1865" y="196.5" textLength="35" lengthAdjust="spacingAndGlyphs" style="fill:#111">52628.5</text>
<text class="atr" x="1788" y="584" textLength="65" lengthAdjust="spacingAndGlyphs">ATR:2828.7</text>
<text x="1290.2" y="608.3" textLength="12" lengthAdjust="spacingAndGlyphs">MN</text>
<text x="1290.2" y="644" textLength="112.2" lengthAdjust="spacingAndGlyphs">MAX_Oscillator 45 25 71 39</text>
<text x="1290.2" y="784" textLength="117" lengthAdjust="spacingAndGlyphs">David (Reset 3:00) 4470317</text>
<text x="1862.5" y="783" textLength="38" lengthAdjust="spacingAndGlyphs">7742580</text><text x="1866.5" y="854" textLength="32" lengthAdjust="spacingAndGlyphs">223099</text>
<text x="1862.5" y="643" textLength="15" lengthAdjust="spacingAndGlyphs">100</text><text x="1862.5" y="664.7" textLength="10.5" lengthAdjust="spacingAndGlyphs">80</text><text x="1862.5" y="705.7" textLength="10.5" lengthAdjust="spacingAndGlyphs">50</text><text x="1862.5" y="746.7" textLength="10.5" lengthAdjust="spacingAndGlyphs">20</text><text x="1862.5" y="768.3" textLength="5" lengthAdjust="spacingAndGlyphs">0</text>
<text x="1863" y="606" style="font-size:8px">1</text><text x="1863" y="610" style="font-size:8px">0</text><text x="1863" y="624" style="font-size:8px">1</text><text x="1863" y="628" style="font-size:8px">0</text>
<text x="1287" y="868.7" textLength="54" lengthAdjust="spacingAndGlyphs">26 May 2024</text><text x="1372.7" y="868.7" textLength="52" lengthAdjust="spacingAndGlyphs">15 Sep 2024</text><text x="1458" y="868.7" textLength="45.3" lengthAdjust="spacingAndGlyphs">5 Jan 2025</text><text x="1542.9" y="868.7" textLength="51.4" lengthAdjust="spacingAndGlyphs">27 Apr 2025</text><text x="1628.6" y="868.7" textLength="52.7" lengthAdjust="spacingAndGlyphs">17 Aug 2025</text><text x="1713.5" y="868.7" textLength="47.8" lengthAdjust="spacingAndGlyphs">7 Dec 2025</text>
</svg>
</body></html>
